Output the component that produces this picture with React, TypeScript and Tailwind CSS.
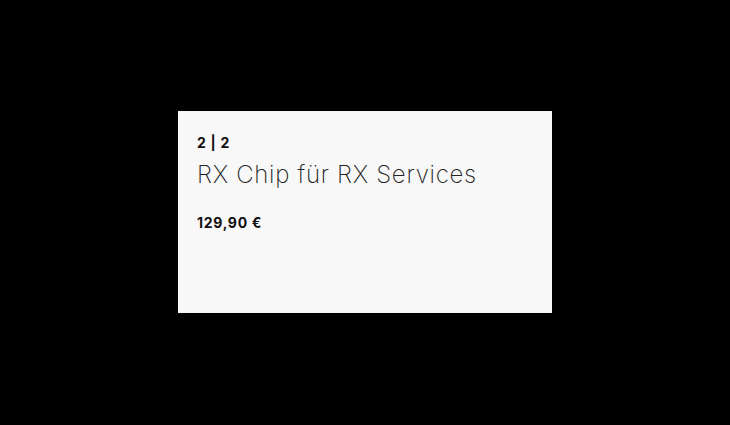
export default function App() {
  return (
    <div className="w-[730px] h-[425px] bg-black flex justify-center pt-[111px]" style={{ fontFamily: 'Inter, "Noto Sans", sans-serif' }}>
      <div className="w-[374px] h-[202px] bg-[#f8f8f8] pl-[19px] pt-[22px] flex flex-col">
        <div className="text-[14px] leading-[20px] font-bold text-[#111] tracking-[0.7px]">2 | 2</div>
        <div className="mt-[6px] text-[24px] leading-[32px] font-extralight text-[#222] tracking-[0.7px]">RX Chip für RX Services</div>
        <div className="mt-[22px] text-[14px] leading-[20px] font-bold text-[#111] tracking-[0.7px]">129,90 €</div>
      </div>
    </div>
  );
}
